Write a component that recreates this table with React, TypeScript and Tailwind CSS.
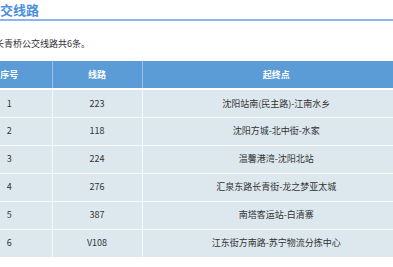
const routes = [
  { no: "1", line: "223", stops: "沈阳站南(民主路)-江南水乡" },
  { no: "2", line: "118", stops: "沈阳方城-北中街-水家" },
  { no: "3", line: "224", stops: "温馨港湾-沈阳北站" },
  { no: "4", line: "276", stops: "汇泉东路长青街-龙之梦亚太城" },
  { no: "5", line: "387", stops: "南塔客运站-白清寨" },
  { no: "6", line: "V108", stops: "江东街方南路-苏宁物流分拣中心" },
];

const font = { fontFamily: '"Microsoft YaHei", "Noto Sans CJK SC", "Noto Sans", sans-serif' };

export default function App() {
  return (
    <div className="w-[393px] h-[267px] overflow-hidden bg-white" style={font}>
      <div className="ml-[-33px] w-[460px]">
        <div className="border-b-2 border-[#8db5e6] pl-[20px] pt-[1px] h-[21px]">
          <h2 className="text-[13px] leading-[18px] font-bold text-[#4a8fdc]">公交线路</h2>
        </div>
        <p className="pl-[28px] mt-[17px] text-[9px] leading-[12px] text-[#333]">长青桥公交线路共6条。</p>
        <table className="mt-[11px] w-[443px] border-collapse text-[9px] text-center">
          <thead>
            <tr className="bg-[#5b9bd6] text-white font-bold h-[28px]">
              <th className="w-[85px] border-r border-white/40 border-b-2 border-b-white">序号</th>
              <th className="w-[90px] border-r border-white/40 border-b-2 border-b-white">线路</th>
              <th className="border-b-2 border-b-white">起终点</th>
            </tr>
          </thead>
          <tbody>
            {routes.map((r) => (
              <tr key={r.no} className="bg-[#dde8ee] text-[#333] h-[28px] border-b border-white/80">
                <td className="border-r border-white/70">{r.no}</td>
                <td className="border-r border-white/70">{r.line}</td>
                <td>{r.stops}</td>
              </tr>
            ))}
          </tbody>
        </table>
      </div>
    </div>
  );
}
